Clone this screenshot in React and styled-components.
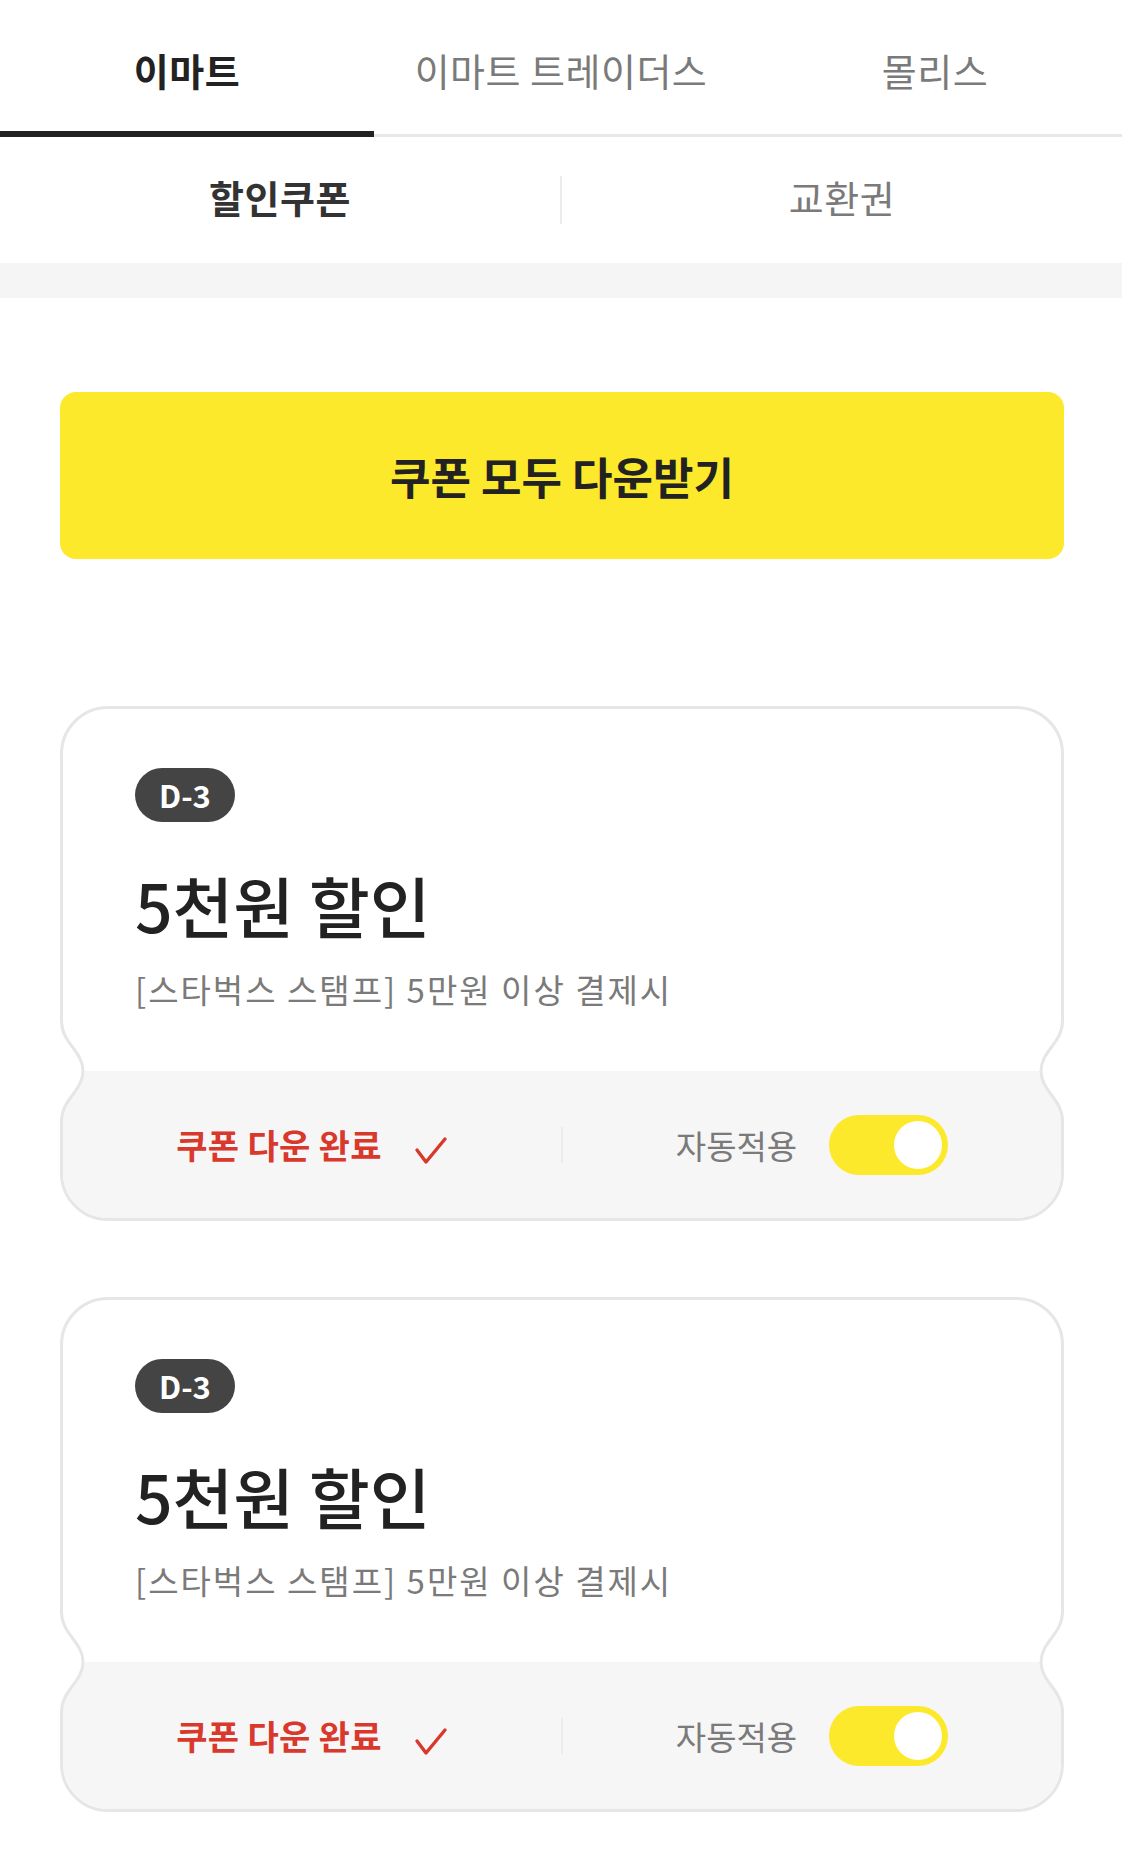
import React from 'react';
import styled, { createGlobalStyle } from 'styled-components';

const GlobalStyle = createGlobalStyle`
    body {
        margin: 0;
        background: #fff;
        font-family: "Noto Sans CJK KR", "Noto Sans", sans-serif;
        color: #222;
    }
`;

const brands = ['이마트', '이마트 트레이더스', '몰리스'];

const coupons = [
    { id: 1, dday: 'D-3', title: '5천원 할인', desc: '[스타벅스 스탬프] 5만원 이상 결제시' },
    { id: 2, dday: 'D-3', title: '5천원 할인', desc: '[스타벅스 스탬프] 5만원 이상 결제시' },
];

const Notch = ({side}) => (
    <NotchSvg side={side} viewBox="0 0 30 100" width="30" height="100">
        <path d="M0,0 L1.5,0 C1.5,22 23,30 23,50 C23,70 1.5,78 1.5,100 L0,100 Z" fill="#fff"/>
        <path d="M1.5,0 C1.5,22 23,30 23,50 C23,70 1.5,78 1.5,100" fill="none" stroke="#e6e6e6" strokeWidth="3"/>
    </NotchSvg>
);

const CheckIcon = () => (
    <CheckSvg width="34" height="30" viewBox="0 0 34 30">
        <polyline points="3,15 12,27 31,4" fill="none" stroke="#d9382c" strokeWidth="3.4" strokeLinecap="round" strokeLinejoin="round"/>
    </CheckSvg>
);

const Coupon = ({dday, title, desc}) => (
    <Card>
        <CardTop>
            <Badge>{dday}</Badge>
            <Title>{title}</Title>
            <Desc>{desc}</Desc>
        </CardTop>
        <CardBottom>
            <Half>
                <Done>쿠폰 다운 완료</Done>
                <CheckIcon/>
            </Half>
            <Divider height={36}/>
            <Half>
                <AutoLabel>자동적용</AutoLabel>
                <Toggle on>
                    <Knob/>
                </Toggle>
            </Half>
        </CardBottom>
        <Notch side="left"/>
        <Notch side="right"/>
    </Card>
);

const App = () => {
    return (
        <Page>
            <GlobalStyle/>
            <TopTabs>
                {brands.map((b, i) => (
                    <TopTab key={b} active={i === 0}>{b}</TopTab>
                ))}
            </TopTabs>
            <SubTabs>
                <SubTab active>할인쿠폰</SubTab>
                <Divider height={48}/>
                <SubTab>교환권</SubTab>
            </SubTabs>
            <Band/>
            <Content>
                <DownloadAll>쿠폰 모두 다운받기</DownloadAll>
                <CardList>
                    {coupons.map(c => <Coupon key={c.id} {...c}/>)}
                </CardList>
            </Content>
        </Page>
    );
}

const Page = styled.div`
    width: 1122px;
    min-height: 1875px;
    background: #fff;
`;

const TopTabs = styled.div`
    display: grid;
    grid-template-columns: repeat(3, 1fr);
    border-bottom: 3px solid #e8e8e8;
`;

const TopTab = styled.div`
    box-sizing: border-box;
    height: 137px;
    margin-bottom: -3px;
    padding-top: 8px;
    border-bottom: 6px solid ${({active}) => active ? '#222' : 'transparent'};
    display: flex;
    align-items: center;
    justify-content: center;
    font-size: 38px;
    font-weight: ${({active}) => active ? 700 : 400};
    color: ${({active}) => active ? '#222' : '#7a7a7a'};
    letter-spacing: 0.5px;
`;

const SubTabs = styled.div`
    height: 126px;
    display: flex;
    align-items: center;
`;

const SubTab = styled.div`
    flex: 1;
    text-align: center;
    font-size: 38px;
    padding-bottom: 8px;
    font-weight: ${({active}) => active ? 700 : 400};
    color: ${({active}) => active ? '#333' : '#7a7a7a'};
    letter-spacing: 0.5px;
`;

const Divider = styled.div`
    width: 2px;
    height: ${({height}) => height}px;
    background: #ebebeb;
    flex-shrink: 0;
`;

const Band = styled.div`
    height: 35px;
    background: #f5f5f5;
`;

const Content = styled.div`
    padding: 94px 58px 0 60px;
`;

const DownloadAll = styled.button`
    display: flex;
    align-items: center;
    justify-content: center;
    width: 100%;
    height: 167px;
    border: none;
    border-radius: 16px;
    background: #fde92b;
    font-family: inherit;
    font-size: 44px;
    font-weight: 700;
    color: #222;
    cursor: pointer;
`;

const CardList = styled.div`
    display: flex;
    flex-direction: column;
    gap: 76px;
    margin-top: 147px;
`;

const Card = styled.div`
    position: relative;
    border: 3px solid #e6e6e6;
    border-radius: 48px;
    background: #fff;
`;

const CardTop = styled.div`
    box-sizing: border-box;
    height: 362px;
    padding: 59px 72px 0;
    display: flex;
    flex-direction: column;
    align-items: flex-start;
`;

const Badge = styled.div`
    height: 54px;
    padding: 0 24px;
    border-radius: 27px;
    background: #444;
    color: #fff;
    font-size: 31px;
    font-weight: 700;
    line-height: 54px;
`;

const Title = styled.h2`
    margin: 42px 0 0;
    font-size: 66px;
    font-weight: 500;
    line-height: 80px;
    color: #222;
`;

const Desc = styled.p`
    margin: 24px 0 0;
    font-size: 33px;
    font-weight: 400;
    line-height: 42px;
    color: #7a7a7a;
    letter-spacing: 2px;
`;

const CardBottom = styled.div`
    height: 147px;
    border-radius: 0 0 45px 45px;
    background: #f6f6f6;
    display: flex;
    align-items: center;
`;

const Half = styled.div`
    flex: 1;
    display: flex;
    align-items: center;
    justify-content: center;
    gap: 32px;
`;

const Done = styled.span`
    font-size: 34px;
    font-weight: 700;
    color: #d9382c;
    letter-spacing: 0.3px;
`;

const CheckSvg = styled.svg`
    margin-top: 10px;
`;

const AutoLabel = styled.span`
    font-size: 33px;
    font-weight: 400;
    color: #7a7a7a;
`;

const Toggle = styled.div`
    box-sizing: border-box;
    width: 119px;
    height: 60px;
    padding: 6px;
    border-radius: 30px;
    background: ${({on}) => on ? '#fde92b' : '#ddd'};
    display: flex;
    justify-content: ${({on}) => on ? 'flex-end' : 'flex-start'};
`;

const Knob = styled.div`
    width: 48px;
    height: 48px;
    border-radius: 50%;
    background: #fff;
`;

const NotchSvg = styled.svg`
    position: absolute;
    top: 312px;
    ${({side}) => side === 'left' ? 'left: -3px;' : 'right: -3px; transform: scaleX(-1);'}
`;

export default App;
